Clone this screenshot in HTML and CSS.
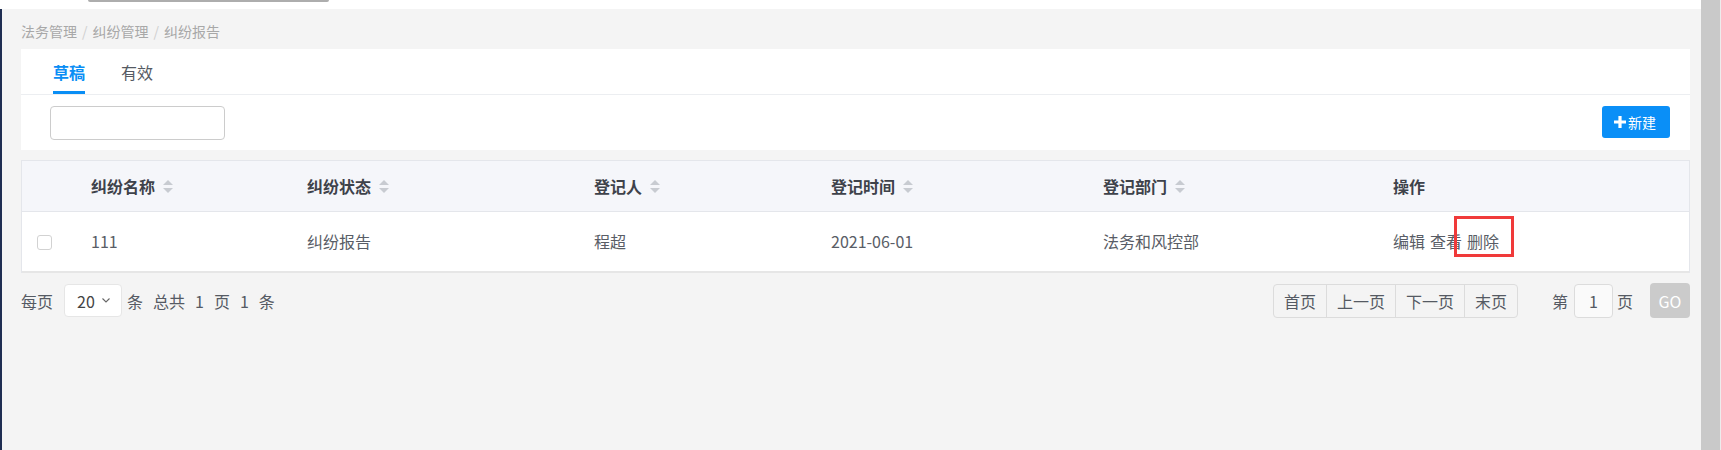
FILE: index.html
```html
<!DOCTYPE html>
<html lang="zh-CN">
<head>
<meta charset="utf-8">
<title>纠纷报告</title>
<link rel="stylesheet" href="styles.css">
</head>
<body>
<div class="app">
  <div class="main">
    <div class="topbar"><div class="topthumb"></div></div>
    <div class="content">
      <div class="crumb">
        <span>法务管理</span><span class="sep">/</span><span>纠纷管理</span><span class="sep">/</span><span>纠纷报告</span>
      </div>

      <div class="panel">
        <div class="tabs">
          <div class="tab active">草稿</div>
          <div class="tab">有效</div>
        </div>
        <div class="toolbar">
          <input class="search" type="text">
          <button class="btn-new">
            <svg width="12" height="12" viewBox="0 0 12 12"><path d="M4.4 0h3.2v4.4H12v3.2H7.6V12H4.4V7.6H0V4.4h4.4z" fill="#fff"/></svg>
            <span>新建</span>
          </button>
        </div>
      </div>

      <div class="table">
        <div class="thead">
          <div class="cell"></div>
          <div class="cell">纠纷名称<svg class="sort" width="10" height="13" viewBox="0 0 10 13"><path d="M5 0L10 5H0z" fill="#c8cbd1"/><path d="M0 8H10L5 13z" fill="#c8cbd1"/></svg></div>
          <div class="cell">纠纷状态<svg class="sort" width="10" height="13" viewBox="0 0 10 13"><path d="M5 0L10 5H0z" fill="#c8cbd1"/><path d="M0 8H10L5 13z" fill="#c8cbd1"/></svg></div>
          <div class="cell">登记人<svg class="sort" width="10" height="13" viewBox="0 0 10 13"><path d="M5 0L10 5H0z" fill="#c8cbd1"/><path d="M0 8H10L5 13z" fill="#c8cbd1"/></svg></div>
          <div class="cell">登记时间<svg class="sort" width="10" height="13" viewBox="0 0 10 13"><path d="M5 0L10 5H0z" fill="#c8cbd1"/><path d="M0 8H10L5 13z" fill="#c8cbd1"/></svg></div>
          <div class="cell">登记部门<svg class="sort" width="10" height="13" viewBox="0 0 10 13"><path d="M5 0L10 5H0z" fill="#c8cbd1"/><path d="M0 8H10L5 13z" fill="#c8cbd1"/></svg></div>
          <div class="cell">操作</div>
        </div>
        <div class="trow">
          <div class="cell"><span class="checkbox"></span></div>
          <div class="cell">111</div>
          <div class="cell">纠纷报告</div>
          <div class="cell">程超</div>
          <div class="cell">2021-06-01</div>
          <div class="cell">法务和风控部</div>
          <div class="cell ops"><span>编辑</span><span>查看</span><span class="mark">删除</span></div>
        </div>
      </div>

      <div class="pager">
        <div class="pg-left">
          <span>每页</span>
          <div class="select"><span>20</span><svg width="8" height="5" viewBox="0 0 8 5"><path d="M0.5 0.5L4 4L7.5 0.5" fill="none" stroke="#666" stroke-width="1.1"/></svg></div>
          <span class="tight">条</span>
          <span>总共</span>
          <span>1</span>
          <span>页</span>
          <span>1</span>
          <span>条</span>
        </div>
        <div class="pg-right">
          <div class="pg-btns">
            <span>首页</span><span>上一页</span><span>下一页</span><span>末页</span>
          </div>
          <span class="di">第</span>
          <div class="pg-input">1</div>
          <span class="ye">页</span>
          <div class="go">GO</div>
        </div>
      </div>
    </div>
  </div>
  <div class="vscroll"></div>
</div>
</body>
</html>
```

FILE: styles.css
```css
* { box-sizing: border-box; }
html, body {
  margin: 0;
  padding: 0;
  height: 450px;
  overflow: hidden;
  font-family: "Noto Sans CJK SC", "Noto Sans", sans-serif;
}
.app {
  display: flex;
  height: 450px;
}
.main {
  width: 1701px;
  display: flex;
  flex-direction: column;
}
.topbar {
  height: 9px;
  background: #fff;
  padding-left: 88px;
}
.topthumb {
  width: 241px;
  height: 2px;
  background: #adadad;
  border-radius: 0 0 2px 2px;
}
.content {
  flex: 1;
  background: #f4f4f4;
  border-left: 2px solid #1f2e52;
  padding: 12px 11px 0 19px;
}
.crumb {
  font-size: 14px;
  line-height: 20px;
  color: #a8a8a8;
  display: flex;
  margin-bottom: 8px;
}
.crumb .sep {
  color: #cfcfcf;
  padding: 0 5px;
}
.panel {
  background: #fff;
}
.tabs {
  display: flex;
  gap: 36px;
  padding-left: 32px;
  border-bottom: 1px solid #eceef1;
}
.tab {
  font-size: 16px;
  line-height: 20px;
  padding: 13px 0 9px;
  border-bottom: 3px solid transparent;
  color: #555a63;
}
.tab.active {
  color: #0a8ef5;
  font-weight: 600;
  border-bottom-color: #0a8ef5;
}
.toolbar {
  display: flex;
  justify-content: space-between;
  align-items: flex-start;
  padding: 11px 20px 10px 29px;
}
.search {
  width: 175px;
  height: 34px;
  border: 1px solid #cccccc;
  border-radius: 4px;
  background: #fff;
  margin: 0;
  outline: none;
}
.btn-new {
  height: 32px;
  width: 68px;
  border: none;
  border-radius: 3px;
  background: #0a8ff7;
  color: #fff;
  font-family: inherit;
  font-size: 14px;
  display: flex;
  align-items: center;
  padding: 0 0 0 12px;
  gap: 2px;
  margin: 0;
}
.table {
  margin-top: 10px;
  background: #fff;
  border: 1px solid #e4e6eb;
  border-bottom: none;
}
.thead, .trow {
  display: grid;
  grid-template-columns: 69px 216px 287px 237px 272px 290px 1fr;
  align-items: center;
}
.thead {
  height: 51px;
  background: #f5f6fa;
  border-bottom: 1px solid #e4e6eb;
  font-size: 16px;
  font-weight: 600;
  color: #3e424a;
}
.trow {
  height: 61px;
  padding-bottom: 2px;
  border-bottom: 2px solid #e6e6e6;
  font-size: 16px;
  color: #595d66;
}
.cell {
  display: flex;
  align-items: center;
  line-height: 20px;
}
.sort {
  margin-left: 8px;
}
.checkbox {
  display: block;
  width: 15px;
  height: 15px;
  margin-left: 15px;
  margin-top: 4px;
  border: 1px solid #d2d2d2;
  border-radius: 3px;
  background: #fff;
}
.ops {
  gap: 5px;
}
.mark {
  position: relative;
}
.mark::after {
  content: "";
  position: absolute;
  left: -13px;
  right: -15px;
  top: -15px;
  bottom: -6px;
  border: 3px solid #f03a3a;
}
.pager {
  margin-top: 10px;
  display: flex;
  justify-content: space-between;
  align-items: center;
  font-size: 16px;
  color: #555a63;
  line-height: 20px;
}
.pg-left {
  display: flex;
  align-items: center;
  gap: 10px;
}
.select {
  width: 58px;
  height: 33px;
  margin-left: 1px;
  background: #fff;
  border: 1px solid #e6e6e6;
  border-radius: 4px;
  display: flex;
  align-items: center;
  padding-left: 12px;
  gap: 7px;
  color: #444;
}
.tight {
  margin-left: -5px;
}
.pg-right {
  display: flex;
  align-items: center;
}
.pg-btns {
  display: flex;
  height: 34px;
  border: 1px solid #dcdcdc;
  border-radius: 4px;
}
.pg-btns span {
  display: flex;
  align-items: center;
  padding: 0 10px;
}
.pg-btns span + span {
  border-left: 1px solid #dcdcdc;
}
.di {
  margin-left: 34px;
}
.pg-input {
  width: 39px;
  height: 34px;
  margin-left: 6px;
  border: 1px solid #dcdcdc;
  border-radius: 4px;
  background: #fafafa;
  display: flex;
  align-items: center;
  justify-content: center;
}
.ye {
  margin-left: 4px;
}
.go {
  width: 40px;
  height: 35px;
  margin-left: 17px;
  background: #cbcbcb;
  color: #fff;
  border-radius: 4px;
  display: flex;
  align-items: center;
  justify-content: center;
}
.vscroll {
  width: 20px;
  background: #c9c9c9;
  border-right: 1px solid #ececec;
}
```
